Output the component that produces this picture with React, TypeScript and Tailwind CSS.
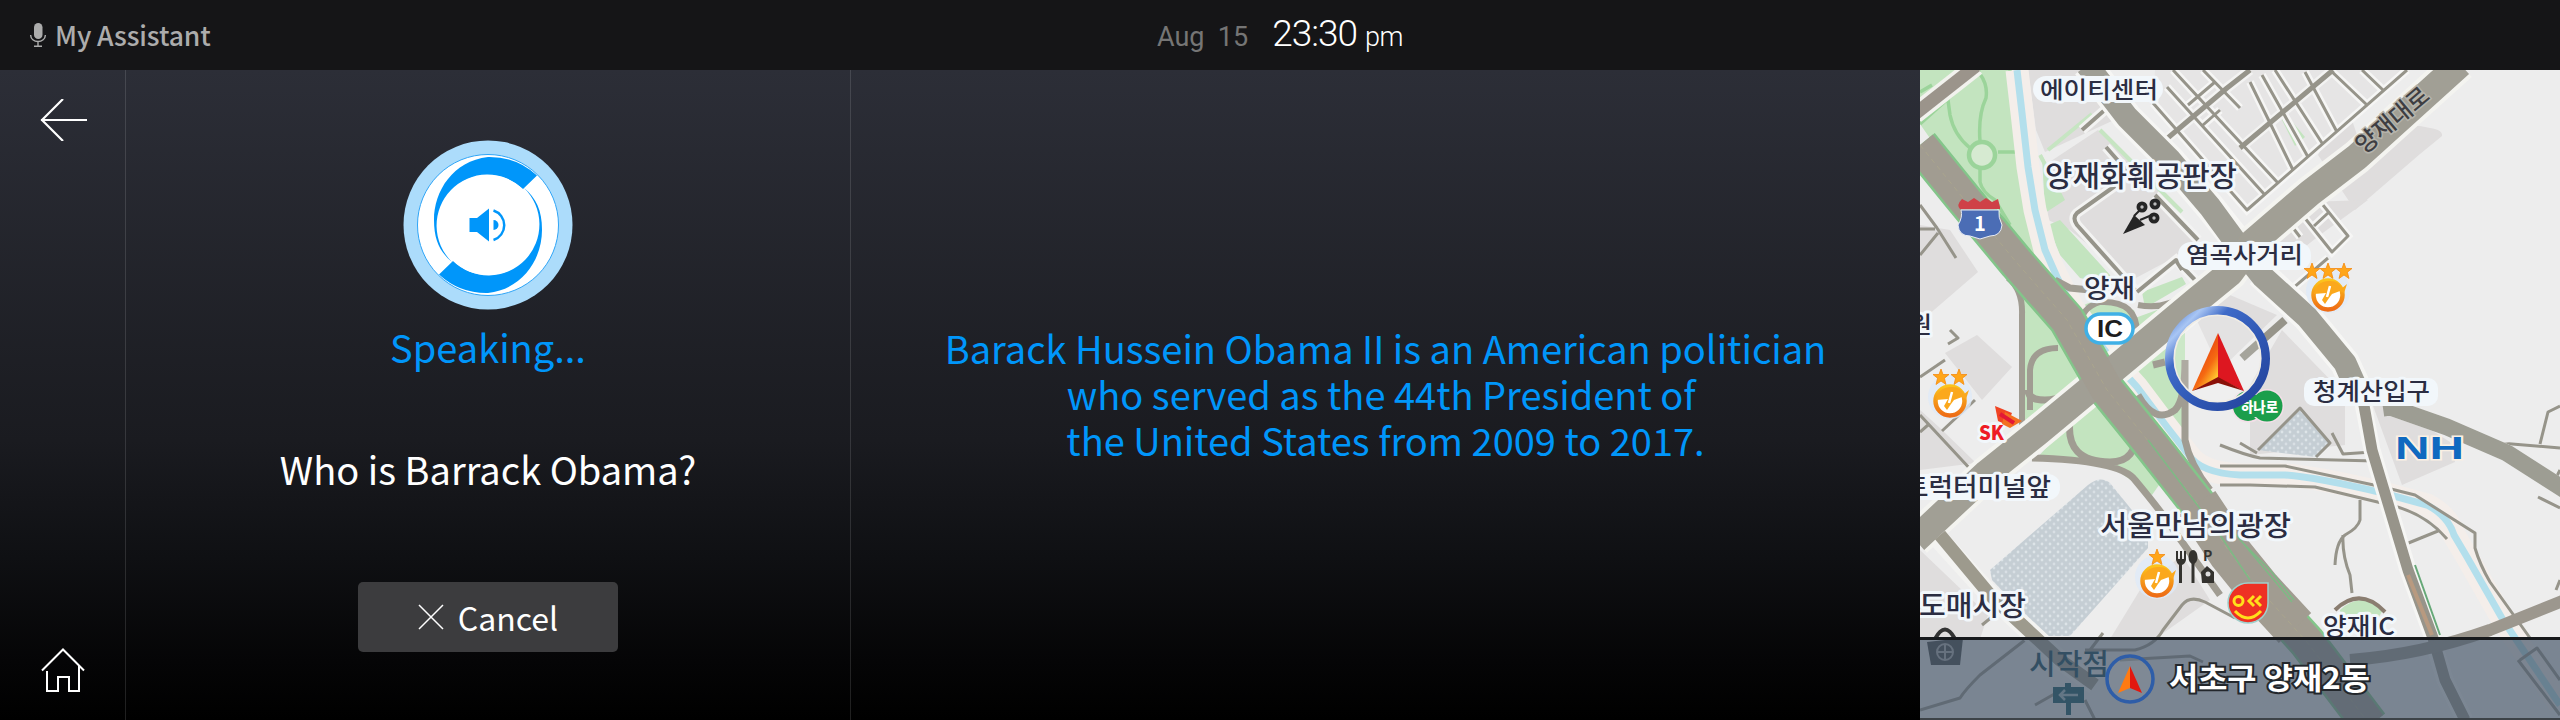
import React from 'react';

const halo = { paintOrder: 'stroke' as const, stroke: '#f2f7fb', strokeWidth: 6, strokeLinejoin: 'round' as const };

function Label({ x, y, size, width, children, fill = '#2b2d42' }: { x: number; y: number; size: number; width: number; children: string; fill?: string }) {
  return (
    <text x={x} y={y} fontSize={size} textLength={width} lengthAdjust="spacingAndGlyphs" fill={fill} fontWeight={500} {...halo}>
      {children}
    </text>
  );
}

function Star({ x, y }: { x: number; y: number }) {
  return <path transform={`translate(${x} ${y})`} d="M0-8 2-2.5 8-2.5 3.4 1.2 5 7.5 0 4-5 7.5-3.4 1.2-8-2.5-2-2.5Z" fill="#ffa61a" stroke="#f58a10" strokeWidth="0.8" />;
}

function Spot({ x, y, stars }: { x: number; y: number; stars: number[] }) {
  return (
    <g>
      <circle cx={x} cy={y - 4} r="22" fill="#dfeaf7" opacity="0.8" />
      {stars.map((s) => <Star key={s} x={x + s} y={y - 24} />)}
      <circle cx={x} cy={y} r="14.500" fill="#fff" stroke="url(#spot)" strokeWidth="4.5" />
      <path d={`M${x - 14} ${y - 1}Q${x - 12} ${y - 13} ${x} ${y - 14}T${x + 13} ${y - 6}L${x + 19} ${y - 11}L${x + 16} ${y - 2}L${x + 12} ${y - 4}L${x + 4} ${y - 1}L${x + 1} ${y + 3}L${x - 3} ${y + 9}L${x - 6} ${y + 5}L${x - 2} ${y - 2}Z`} fill="#fba81c" />
      <path d={`M${x + 2} ${y - 9}L${x - 1} ${y + 2}`} stroke="#fff" strokeWidth="2.500" />
    </g>
  );
}

const river = 'M97 0 102 43 108 97 115 140 125 180 137 207 152 237 190 287 217 317 247 357 268 384Q280 403 320 405H365Q395 407 463 423L507 435Q528 446 534 465L547 487 583 550 640 635';
const highway = 'M0 75 43 128 97 193 147 250 187 320 233 377 277 433 310 483 340 520 387 572 450 655';
const boulevard = 'M540-6 437 87 390 123 333 172 310 203 277 230 187 305 117 363 67 403-5 470';
const blockStreets = 'M233 33 327 140 487 0M247 17 345 125M253 0 358 113M283 0 320 38M330 12 373 100M342 5 388 87M355 0 402 73M385 2 417 62M410 0 447 35M442 0 463 20M268 35 295 12M283 55 300 40M372 132 412 182 428 166 394 124M394 156 408 143M370 154 380 167M365 225 408 188M392 246 402 237';

function MapView() {
  return (
    <svg viewBox="0 0 640 650" className="block h-[650px] w-[640px]" fontFamily="'Noto Sans CJK KR', sans-serif">
      <defs>
        <linearGradient id="ring" x1="0" y1="0" x2="1" y2="1">
          <stop offset="0" stopColor="#3f6cc8" /><stop offset="0.16" stopColor="#a9c6f4" /><stop offset="0.3" stopColor="#3f6bc8" /><stop offset="0.6" stopColor="#2f57b4" /><stop offset="1" stopColor="#23429a" />
        </linearGradient>
        <linearGradient id="spot" x1="0" y1="0" x2="0" y2="1">
          <stop offset="0" stopColor="#fcc31c" /><stop offset="1" stopColor="#ee6d16" />
        </linearGradient>
        <linearGradient id="arrowLeft" x1="0.2" y1="0" x2="0.9" y2="1">
          <stop offset="0.2" stopColor="#e5380f" /><stop offset="0.6" stopColor="#f56a12" /><stop offset="0.85" stopColor="#ffc42e" />
        </linearGradient>
        <pattern id="dots" width="8" height="8" patternUnits="userSpaceOnUse">
          <rect width="8" height="8" fill="#c5ced4" /><circle cx="2" cy="2" r="1.4" fill="#dde4e8" /><circle cx="6" cy="6" r="1.4" fill="#d8dfe4" />
        </pattern>
      </defs>
      <rect width="640" height="650" fill="#ededed" />

      <g fill="#dfdddd">
        <path d="M108 0H165L205 45 125 82 116 60Z" />
        <path d="M0 155 30 160 58 202 0 252Z M25 283 57 265 92 297 62 330Z M0 340 20 358 56 393 0 400Z" />
        <path d="M125 95 178 60 250 130 278 175 212 210 150 160 128 150Z" />
        <path d="M0 480 68 545 60 569H0Z M220 520 262 485 290 530 235 569H190Z" />
        <path d="M403 76 432 50 438 68Q450 68 470 60T510 58Q523 60 522 66L500 84 435 140 398 85Z" />
        <path d="M350 175 385 132 448 130 400 165 362 195Z M272 240 310 225 357 245 300 300Z M330 315 362 260 425 325V375L330 385Z M452 333 480 340 530 372 535 392 482 415Z" />
      </g>
      <path d="M235 0H487L327 140 233 33Z" fill="#e6e5e5" />

      <g fill="#c3e4bf">
        <path d="M0 0H90L98 85 118 205 60 140 0 54Z" />
        <path d="M122 85 145 130 125 143ZM128 155 140 150 190 205 192 215 160 208 140 185Z M222 222 262 207 266 214 225 238Z" />
        <path d="M95 205 165 285 105 270Z" />
        <path d="M104 232 140 270 180 305 122 366 100 360Z" />
        <path d="M158 245Q160 230 185 232L214 240 220 265 205 280Z M215 248 248 236 205 280Z" />
        <path d="M115 390 180 320 246 405 232 425 185 392Z" />
        <path d="M210 295 265 250V365L240 350 200 310Z" />
        <path d="M358 104 370 111 385 129 375 138Z" transform="translate(0 -62)" />
        <path d="M420 540Q442 520 463 540L450 562 423 560Z" />
      </g>
      <path d="M128 80 172 44M180 60 262 142M120 85 128 100" stroke="#c6e5c2" strokeWidth="4" fill="none" />

      <g fill="none" stroke="#9bd49a" strokeWidth="4.5">
        <circle cx="62" cy="85" r="13" fill="#d6ead1" />
        <path d="M78 82H97M60 71Q58 45 66 28 68 15 60 4M50 78Q34 65 30 45L28 30M60 98V112Q62 122 75 130L90 155M0 22 12 15M0 54 60 0M90 0 98 85 120 205" strokeWidth="3.5" />
      </g>

      <path d={river} fill="none" stroke="#f4eeea" strokeWidth="23" />
      <path d={river} fill="none" stroke="#b3dfec" strokeWidth="7" />

      <g fill="url(#dots)">
        <path d="M70 500 168 415Q180 405 190 413L228 460 228 478 150 566H125L72 510Z" />
        <path d="M337 380 380 340 410 374 395 387Z" />
      </g>

      <path d={blockStreets} fill="none" stroke="#f6f6f5" strokeWidth="8" />
      <path d="M243 72 307 18 330 0M320 78 413 0M162 60 187 38M186 77 215 110M195 116 157 143Q152 148 157 155L215 220M235 125 278 170M217 222 256 190 275 210" fill="none" stroke="#f3f3f2" strokeWidth="10" />
      <g fill="none" stroke="#96948a" strokeWidth="3" strokeLinejoin="round">
        <path d="M243 72 307 18 330 0M320 78 413 0" strokeWidth="5" />
        <path d={blockStreets} />
        <path d="M162 60 187 38M186 77 215 110M195 116 157 143Q152 148 157 155L215 220M235 125 278 170M217 222 256 190 275 210M257 192 262 200" strokeWidth="4" />
        <path d="M0 135 17 158 36 188M0 159H15M18 163 0 185M30 260 38 268 28 274M0 307 25 290" />
        <path d="M0 345 53 402M22 361 55 330M0 362 8 355M24 468 78 525M62 555 78 542" />
        <path d="M322 288 365 250" strokeWidth="8" />
        <path d="M300 375Q325 385 340 388L455 391M320 373 337 383M338 380 380 338 410 373 396 387M412 363 423 384 452 382M300 415H330L395 417 470 435Q505 443 527 469M300 396H365L463 417 495 425 555 463 555 478Q560 495 570 512L610 568M486 474 518 461M440 430V450Q438 458 425 465 416 472 415 495M423 465Q422 485 430 505L432 523" />
        <path d="M577 380Q580 373 592 374L640 378M620 374 628 342 640 336M618 427 640 438M640 510 636 520M635 410 640 400" />
        <path d="M170 580 183 563M165 580H215Q235 575 243 560L262 535Q270 525 285 532L315 548M0 640 40 628Q45 620 60 605L105 570M115 635 145 618M165 630 175 650M200 590 270 586 283 592M600 590 617 578 640 610M598 590 640 645" />
      </g>

      <g fill="none" stroke="#a09c92">
        <path d="M102 370V245Q103 220 88 208M110 340V300Q112 278 138 278M160 258Q160 238 180 232 218 230 217 265M218 235Q245 240 265 225" strokeWidth="6" />
        <path d="M108 320Q108 330 125 330 135 330 148 325M150 350Q145 392 190 392 218 392 215 360M112 388Q200 390 215 410 240 440 250 455L300 525M218 325Q235 355 255 340 265 330 265 290V370Q270 395 290 420M135 210 150 218 170 220M233 295 245 292" strokeWidth="7" />
      </g>
      <path d="M415 540Q440 516 465 542" fill="none" stroke="#8a7d70" strokeWidth="4" />

      <g fill="none" strokeLinejoin="round">
        <path d="M-5 44 56-4" stroke="#f2f2ee" strokeWidth="20" />
        <path d="M-5 44 56-4" stroke="#9b948b" strokeWidth="13" />
        <path d="M167-5 207 47 250 90 290 137 320 175M340 203 387 247 425 293 440 325" stroke="#f6f6f4" strokeWidth="30" />
        <path d="M440 318 452 380 488 500 513 568M470 337 527 357 587 383 645 420M512 568 525 610 545 650" stroke="#f6f6f4" strokeWidth="17" />
        <path d={boulevard} stroke="#f4f4f0" strokeWidth="35" />
        <path d={highway} stroke="#83c58a" strokeWidth="38" />
        <path d="M20 470 70 525 140 590 175 615" stroke="#f3f3f1" strokeWidth="20" />
        <path d="M20 465 70 525 140 590 175 615" stroke="#9d9a8d" strokeWidth="13" />
        <path d="M463 338 470 337 527 357 587 383 645 420" stroke="#9d9d93" strokeWidth="17" />
        <path d="M443 330 452 380 488 500 513 568 525 610 545 650" stroke="#97948a" strokeWidth="11" />
        <path d="M495 495 520 565" stroke="#66a878" strokeWidth="2" />
        <path d="M488 505 512 565" stroke="#b89a80" strokeWidth="4" />
        <path d="M430 590Q500 585 570 560L645 530" stroke="#9c978e" strokeWidth="12" />
        <path d="M167-5 207 47 250 90 290 137 320 178 343 207 387 247 425 293 437 320" stroke="#9f9e95" strokeWidth="23" />
        <path d={boulevard} stroke="#a19f95" strokeWidth="27" />
        <path d={highway} stroke="#a19c91" strokeWidth="33" />
        <path d="M277 433 310 483 340 520 375 558" stroke="#a19c91" strokeWidth="44" />
        <path d={highway} stroke="#aaa58e" strokeWidth="1" strokeDasharray="5 4" />
        <path d="M308 455 372 532M228 370 300 465 330 510M320 470 350 500 374 530" stroke="#7dba85" strokeWidth="1.5" />
      </g>

      <g>
        <g fill="#f2f7fb">
          <rect x="113" y="6" width="130" height="26" rx="13" /><rect x="258" y="172" width="133" height="28" rx="13" />
          <rect x="384" y="308" width="134" height="28" rx="10" /><rect x="-10" y="404" width="150" height="26" rx="12" />
        </g>
        <Label x={120} y={28} size={23} width={118}>에이티센터</Label>
        <Label x={125} y={117} size={29} width={192}>양재화훼공판장</Label>
        <Label x={266} y={193} size={23} width={117}>염곡사거리</Label>
        <Label x={164} y={228} size={26} width={51}>양재</Label>
        <Label x={393} y={330} size={24} width={117}>청계산입구</Label>
        <Label x={-16} y={426} size={25} width={147}>트럭터미널앞</Label>
        <Label x={180} y={466} size={28} width={191}>서울만남의광장</Label>
        <Label x={-1} y={546} size={28} width={107}>도매시장</Label>
        <Label x={403} y={565} size={24} width={72}>양재IC</Label>
        <Label x={-11} y={263} size={23} width={23}>원</Label>
        <g transform="translate(444 85) rotate(-40)"><text fontSize="24" fontWeight="500" fill="#3e3e42" textLength="88" lengthAdjust="spacingAndGlyphs" stroke="#b5b3ab" strokeWidth="3" paintOrder="stroke">양재대로</text></g>
      </g>

      <g>
        <path d="M40 139Q36 135 42 129L48 132 54 128 60 132 66 128 72 132 78 129 80 137V139Z" fill="#cf4147" />
        <path d="M41 140H79Q78 147 82 155 81 166 70 166L60 169 50 166Q39 166 38 155 43 147 41 140Z" fill="#4b6db5" stroke="#e8ecf5" strokeWidth="1" />
        <text x="60" y="161" fontSize="20" fontWeight="700" textAnchor="middle" fill="#fff">1</text>
        <rect x="166" y="244" width="47" height="29" rx="14.5" fill="#fff" stroke="#3fb0e6" strokeWidth="3.5" />
        <text x="177" y="267" fontSize="24" fontWeight="700" fontFamily="'Liberation Sans', sans-serif" fill="#1d1d1d" textLength="26" lengthAdjust="spacingAndGlyphs">IC</text>
        <g fill="#252525">
          <path d="M203 164 214 145 225 155Z" /><path d="M214 146 222 138M220 150 232 145" stroke="#252525" strokeWidth="2" />
          <circle cx="222" cy="137" r="5.5" /><circle cx="235" cy="134" r="5.5" /><circle cx="234" cy="148" r="5.5" />
        </g>
        <g fill="#bbb"><circle cx="222" cy="137" r="1.7" /><circle cx="235" cy="134" r="1.7" /><circle cx="234" cy="148" r="1.7" /></g>
        <Spot x={408} y={225} stars={[-16, 0, 16]} />
        <Spot x={30} y={331} stars={[-9, 9]} />
        <Spot x={237} y={511} stars={[0]} />
        <text x="59" y="370" fontSize="20" fontWeight="900" fill="#ee1c25" textLength="25" lengthAdjust="spacingAndGlyphs" {...halo}>SK</text>
        <path d="M75 336 92 343 87 355 78 351Z" fill="#f04423" /><path d="M85 342 102 351 90 358 82 354Z" fill="#f37021" /><path d="M80 344 94 353" stroke="#e31837" strokeWidth="4" />
        <text x="475" y="389" fontSize="31" fontWeight="700" fontFamily="'Liberation Sans', sans-serif" fill="#0f69c0" textLength="69" lengthAdjust="spacingAndGlyphs" stroke="#faf0e4" strokeWidth="3" paintOrder="stroke">NH</text>
        <g fill="#34332f">
          <path d="M256 481V490Q257 494 259 495V513H262V495Q265 494 266 490V481H264V489H262V481H260V489H258V481Z" />
          <ellipse cx="273" cy="487" rx="4.5" ry="7" /><path d="M271.500 492H274.500V513H271.500Z" />
          <text x="283" y="491" fontSize="14" fontWeight="700">P</text>
          <path d="M281 502 287 496 294 502V513H282Z" /><circle cx="288" cy="504" r="2.500" fill="#ddd" />
        </g>
        <path d="M328 513H348V533A20 20 0 1 1 328 513Z" fill="#ee3124" stroke="#9fd0cc" strokeWidth="1.500" />
        <g fill="none" stroke="#ffdf1b" strokeWidth="3"><circle cx="318.500" cy="531" r="4.500" /><path d="M334 526 329 531 334 536M341 526 336 531 341 536M315 541Q328 555 341 541" /></g>
        <g fill="#1b9e4b" stroke="#f4dfe8" strokeWidth="3" paintOrder="stroke"><circle cx="328" cy="336" r="15" /><circle cx="347" cy="336" r="15.500" /></g>
        <path d="M322 325H352V347H322Z" fill="#1b9e4b" />
        <text x="321" y="342" fontSize="14" fontWeight="900" fill="#fff" textLength="37" lengthAdjust="spacingAndGlyphs">하나로</text>
      </g>

      <circle cx="297.500" cy="288.500" r="46" fill="#ffffff" fillOpacity="0.15" stroke="#f0ece4" strokeWidth="7" />
      <circle cx="297.500" cy="288.500" r="48.300" fill="none" stroke="url(#ring)" strokeWidth="8.400" />
      <path d="M298 263 272 321 298 308Z" fill="url(#arrowLeft)" />
      <path d="M298 263 324 321 298 308Z" fill="#dd1720" />
      <path d="M272 321 298 307 324 321 298 313Z" fill="#8a1109" />

      <g>
        <path d="M7 572 43 568 40 595H11Z" fill="#3a3c3e" /><path d="M15 569Q25 550 35 569" fill="none" stroke="#333" strokeWidth="4" />
        <circle cx="25" cy="582" r="8" fill="none" stroke="#aaa" strokeWidth="2" /><path d="M25 574V590M18 582H32" stroke="#aaa" strokeWidth="2" />
        <text x="109" y="605" fontSize="29" fontWeight="500" fill="#003b50" textLength="80" lengthAdjust="spacingAndGlyphs">시작점</text>
        <path d="M133 617H145V613H151V617H164V633H151V645H146V633H133Z" fill="#004a5c" /><path d="M140 625H158M145 620 140 625 145 630" fill="none" stroke="#a0bcc4" strokeWidth="2.500" />
      </g>
      <rect y="569" width="640" height="81" fill="#48586b" fillOpacity="0.7" />
      <rect y="567" width="640" height="3" fill="#17191c" />
      <rect y="648" width="640" height="2" fill="#3d4348" />
      <circle cx="210" cy="609" r="23" fill="#8a949c" fillOpacity="0.3" stroke="#2e5da8" strokeWidth="3.500" />
      <path d="M210 596 198 623 210 618Z" fill="#ff7a12" /><path d="M210 596 222 623 210 618Z" fill="#e2170f" />
      <text x="249" y="619" fontSize="30" fontWeight="700" fill="#fff" textLength="201" lengthAdjust="spacingAndGlyphs" stroke="#23272c" strokeWidth="4" paintOrder="stroke">서초구 양재2동</text>
    </svg>
  );
}

function SpeakingBadge() {
  return (
    <svg viewBox="0 0 170 170" className="block h-[170px] w-[170px]">
      <circle cx="85" cy="85" r="84.500" fill="#acdcfb" />
      <circle cx="85" cy="85" r="70.500" fill="#fff" stroke="#2fa5f7" strokeWidth="1" />
      <path d="M134 35.500A70 70 0 0 0 85 17C50 21 31 51 31 80 31 100 37 112 49 122A50 50 0 1 1 120 49Z" fill="#0096fa" />
      <path d="M36 134.500A70 70 0 0 0 85 153C120 149 139 119 139 90 139 70 133 58 121 48A50 50 0 1 1 50 121Z" fill="#0096fa" />
      <circle cx="85" cy="85" r="50" fill="#fff" />
      <path d="M66.500 78H74L86 68.500V101.500L74 92H66.500Z" fill="#0096fa" />
      <path d="M90.500 80A5 5 0 0 1 90.500 90Z" fill="#0096fa" />
      <path d="M90.500 70.500A15.500 15.500 0 0 1 90.500 100" fill="none" stroke="#0096fa" strokeWidth="2.500" />
    </svg>
  );
}

export default function App() {
  return (
    <div className="flex h-[720px] w-[2560px] flex-col overflow-hidden bg-black font-['Noto_Sans_CJK_KR',sans-serif]">
      <header className="grid h-[70px] grid-cols-3 items-center bg-[#151517]">
        <div className="flex items-center gap-[9px] pl-[30px] text-[#acacac]">
          <svg viewBox="0 0 16 24" className="h-6 w-4" fill="none" stroke="currentColor">
            <rect x="4" y="0" width="8.500" height="16" rx="4.250" fill="currentColor" stroke="none" />
            <path d="M0.700 12V12.500A7.300 6 0 0 0 15.300 12.500V12M8 18.500V23M4 23.200H12" strokeWidth="1.400" />
          </svg>
          <h1 className="text-[26.5px] leading-none font-medium tracking-[-0.1px]">My Assistant</h1>
        </div>
        <div className="flex items-baseline justify-center pb-[3px] font-['Roboto',sans-serif] font-light text-white">
          <span className="mr-6 text-[27px] font-normal whitespace-pre text-[#757575]">Aug  15</span>
          <span className="text-[37px] tracking-[-1px]">23:30</span>
          <span className="ml-2 text-[27px] tracking-[-0.5px]">pm</span>
        </div>
      </header>
      <main className="flex h-[650px]">
        <div className="flex w-[1920px] bg-[linear-gradient(#2c2e37,#1a1b20_57%,#0f1013_75%,#050506_91%,#000)]">
          <nav className="flex w-[126px] flex-col items-center justify-between border-r border-[#ffffff20] pt-[29px] pb-[28px]">
            <svg viewBox="0 0 48 42" className="ml-[3px] h-[42px] w-12" fill="none" stroke="#fff" strokeWidth="2.200">
              <path d="M1 21H47M23 0 2 21 23 42" />
            </svg>
            <svg viewBox="0 0 44 44" className="h-11 w-11" fill="none" stroke="#fff" strokeWidth="2">
              <path d="M1 22.500 22 1.500 43 22.500M6 23V43H17V29H28V43H38V18" />
            </svg>
          </nav>
          <section className="flex w-[725px] flex-col items-center border-r border-[#ffffff20] pt-[70px]">
            <SpeakingBadge />
            <p className="mt-[14px] text-[38px] leading-[46px] text-[#0096fa]">Speaking...</p>
            <p className="mt-[76px] text-[38px] leading-[46px] text-white">Who is Barrack Obama?</p>
            <button className="mt-[90px] flex h-[70px] w-[260px] items-center justify-center gap-[14px] rounded-[5px] bg-[#3c3c3e] text-[32px] leading-none text-white">
              <svg viewBox="0 0 26 26" className="h-[26px] w-[26px]" stroke="#fff" strokeWidth="1.500"><path d="M1 1 25 25M25 1 1 25" /></svg>
              Cancel
            </button>
          </section>
          <section className="flex flex-1 items-center justify-center pb-[2px] text-center">
            <p className="text-[38px] leading-[46px] text-[#0096fa]">
              Barack Hussein Obama II is an American politician<br />
              who served as the 44th President of&nbsp;<br />
              the United States from 2009 to 2017.
            </p>
          </section>
        </div>
        <MapView />
      </main>
    </div>
  );
}
